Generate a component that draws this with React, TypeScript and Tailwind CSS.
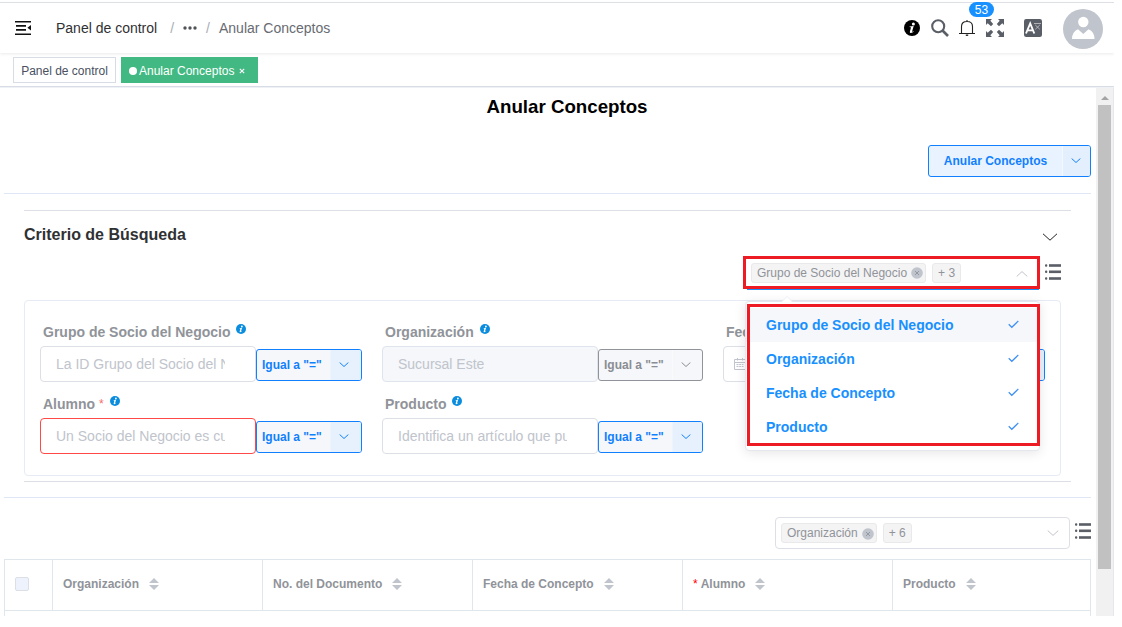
import React from "react";

type Tone = "blue" | "gray";

function InfoIcon({ className }: { className: string }) {
  return (
    <svg viewBox="0 0 16 16" className={className}>
      <circle cx="8" cy="8" r="8" fill="currentColor" />
      <circle cx="9.4" cy="3.9" r="1.5" fill="#fff" />
      <path d="M5.6 6.6 L9.7 6.1 L8.1 11.6 Q8.1 12.1 9.6 10.9 L9.9 11.3 Q8.4 13.2 6.8 13.1 Q5.5 13 5.9 11.5 L7 7.6 Q7 7.1 5.5 7.1 Z" fill="#fff" />
    </svg>
  );
}

function Chevron({ className, up = false }: { className: string; up?: boolean }) {
  return (
    <svg viewBox="0 0 16 8" className={className} fill="none" stroke="currentColor">
      <path d={up ? "M1 7.2 L8 0.8 L15 7.2" : "M1 0.8 L8 7.2 L15 0.8"} vectorEffect="non-scaling-stroke" />
    </svg>
  );
}

function ListIcon() {
  return (
    <svg viewBox="0 0 16 16" className="h-4 w-4 shrink-0" fill="#5a5e66">
      <rect x="0" y="0.2" width="2.3" height="2.6" rx="1" />
      <rect x="0" y="6.5" width="2.3" height="2.6" rx="1" />
      <rect x="0" y="13.2" width="2.3" height="2.6" rx="1" />
      <rect x="4" y="0.2" width="12" height="2.6" />
      <rect x="4" y="6.5" width="12" height="2.6" />
      <rect x="4" y="13.2" width="12" height="2.6" />
    </svg>
  );
}

function Chip({ text, closable = false }: { text: string; closable?: boolean }) {
  return (
    <span className="flex h-5 items-center rounded-[3px] border border-[#e9e9eb] bg-[#f4f4f5] text-xs text-[#909399]">
      <span className={closable ? "pr-[4px] pl-[5px] leading-4" : "px-[5px] leading-4"}>{text}</span>
      {closable && (
        <svg viewBox="0 0 12 12" className="mt-px mr-[2px] h-3 w-3">
          <circle cx="6" cy="6" r="5.8" fill="#c0c4cc" />
          <path d="M4 4 L8 8 M8 4 L4 8" stroke="#909399" strokeWidth="0.9" />
        </svg>
      )}
    </span>
  );
}

function Operator({ tone = "blue", width }: { tone?: Tone; width: string }) {
  const blue = tone === "blue";
  return (
    <div
      className={
        "mt-[3px] flex h-8 shrink-0 overflow-hidden rounded-[3px] border text-xs font-bold " +
        width +
        (blue ? " border-[#1180ff] bg-[#f5f7fa] text-[#1180ff]" : " border-[#909399] bg-[#f5f7fa] text-[#8a8d93]")
      }
    >
      <span className="flex w-[73px] items-center pl-[5px] whitespace-nowrap">Igual a "="</span>
      <span className={"flex grow items-center justify-center border-l pr-[4px] pb-px " + (blue ? "border-[#eef4fd] bg-[#e6f1fd]" : "border-[#fafafa]")}>
        <Chevron className="h-[5px] w-[10px]" />
      </span>
    </div>
  );
}

function Field({
  label,
  placeholder = "",
  required = false,
  disabled = false,
  date = false,
  operatorWidth = "w-[106px]",
}: {
  label: string;
  placeholder?: string;
  required?: boolean;
  disabled?: boolean;
  date?: boolean;
  operatorWidth?: string;
}) {
  const box = required ? "border-[#ff4949] bg-white" : disabled ? "border-[#dfe4ed] bg-[#f5f7fa]" : "border-[#dcdfe6] bg-white";
  return (
    <div className="h-[72px]">
      <div className="flex h-[26px] items-center pl-[3px] text-sm font-bold text-[#909399]">
        <span className="pb-[2px] whitespace-nowrap">{label}</span>
        {required && <span className="pb-[2px] pl-1 text-xs font-normal text-[#f56c6c]">*</span>}
        <InfoIcon className="mb-[9px] ml-[6px] h-[10px] w-[10px] text-[#0a8dde]" />
      </div>
      <div className="flex">
        <div className={"flex h-9 w-[216px] shrink-0 items-center rounded border " + box + (date ? " pl-[10px]" : " pr-[30px] pl-[15px]")}>
          {date && (
            <svg viewBox="0 0 12 12" className="mr-3 h-3 w-3 shrink-0" fill="none" stroke="#c0c4cc">
              <path d="M0.5 1.5 H11.5 V11.5 H0.5 Z M0.5 4.5 H11.5 M3.5 0 V2.5 M8.5 0 V2.5" />
              <path d="M2.5 6.5 H9.5 M2.5 8.5 H9.5" strokeDasharray="2 0.7" />
            </svg>
          )}
          <span className="overflow-hidden text-sm whitespace-nowrap text-[#c0c4cc]">{placeholder}</span>
        </div>
        <Operator tone={disabled ? "gray" : "blue"} width={operatorWidth} />
      </div>
    </div>
  );
}

const options = ["Grupo de Socio del Negocio", "Organización", "Fecha de Concepto", "Producto"];

function CriteriaDropdown() {
  return (
    <div className="absolute top-[45px] left-[2px] z-10 h-[150px] w-[295px] rounded border border-[#e4e7ed] bg-white shadow-[0_2px_12px_rgba(0,0,0,0.1)]">
      <svg viewBox="0 0 12 7" className="absolute -top-[6px] left-[35px] h-[7px] w-3">
        <path d="M0 6.5 L6 0.5 L12 6.5 V7 H0 Z" fill="#fff" />
        <path d="M0 6.5 L6 0.5 L12 6.5" fill="none" stroke="#ebeef5" />
      </svg>
      <ul className="pt-[6px]">
        {options.map((option, i) => (
          <li
            key={option}
            className={"flex h-[34px] items-center justify-between pr-5 pl-5 text-sm font-bold text-[#1890ff] " + (i === 0 ? "bg-[#f5f7fa]" : "")}
          >
            {option}
            <svg viewBox="0 0 11 9" className="mb-px h-[9px] w-[11px]" fill="none" stroke="#3d8ff5" strokeWidth="1.2">
              <path d="M0.7 4.3 L3.8 7.3 L10.3 1" />
            </svg>
          </li>
        ))}
      </ul>
      <div className="absolute top-[2px] left-px h-[142px] w-[293px] border-[3px] border-[#ed1c24]" />
    </div>
  );
}

function Navbar() {
  return (
    <header className="relative z-10 flex h-[51px] shrink-0 items-center border-t border-[#dcdfe3] bg-white pr-[11px] shadow-[0_1px_3px_rgba(0,21,41,0.09)]">
      <svg viewBox="0 0 16 14" className="mr-[25px] mb-px ml-[15px] h-[14px] w-4" fill="#111">
        <path d="M0 0 H16 V1.6 H0 Z M1 4 H11 V5.8 H1 Z M1 8 H11 V9.8 H1 Z M0 12.4 H16 V14 H0 Z M16 4 V9.6 L12.4 6.8 Z" />
      </svg>
      <nav className="flex items-center text-sm">
        <span className="text-[#303133]">Panel de control</span>
        <span className="ml-[13px] text-[#a9adb6]">/</span>
        <svg viewBox="0 0 14 4" className="ml-[9px] h-1 w-[14px]" fill="#505358">
          <circle cx="2" cy="2" r="1.7" />
          <circle cx="7" cy="2" r="1.7" />
          <circle cx="12" cy="2" r="1.7" />
        </svg>
        <span className="mx-[9px] text-[#a9adb6]">/</span>
        <span className="text-[#686b71]">Anular Conceptos</span>
      </nav>
      <div className="ml-auto flex items-center text-[#5a5e66]">
        <InfoIcon className="h-4 w-4 text-black" />
        <svg viewBox="0 0 18 18" className="ml-[11px] h-[18px] w-[18px]" fill="none" stroke="currentColor">
          <circle cx="7.2" cy="7.2" r="6" strokeWidth="2.1" />
          <path d="M11.5 11.5 L17 17" strokeWidth="2.6" />
        </svg>
        <div className="relative ml-[10px]">
          <svg viewBox="0 0 16 18" className="h-[18px] w-4" fill="none" stroke="#222" strokeWidth="1.1">
            <path d="M0 14.5 H16 M2.5 14.5 V7.5 Q2.5 2.5 8 2.5 Q13.5 2.5 13.5 7.5 V14.5 M8 1 V2.5" />
            <path d="M6.8 16.2 H9.2" strokeWidth="1.4" />
          </svg>
          <span className="absolute -top-[17px] left-[10px] flex h-[15px] w-[25px] items-center justify-center rounded-full bg-[#1890ff] text-xs text-white">53</span>
        </div>
        <svg viewBox="0 0 18 18" className="ml-[11px] h-[18px] w-[18px]">
          <g fill="currentColor">
            <path d="M0 0 H6 L4.3 1.7 L7.2 5 L5 7.2 L1.7 4.3 L0 6 Z" />
            <path d="M18 0 V6 L16.3 4.3 L13 7.2 L10.8 5 L13.7 1.7 L12 0 Z" />
            <path d="M0 18 V12 L1.7 13.7 L5 10.8 L7.2 13 L4.3 16.3 L6 18 Z" />
            <path d="M18 18 H12 L13.7 16.3 L10.8 13 L13 10.8 L16.3 13.7 L18 12 Z" />
          </g>
        </svg>
        <svg viewBox="0 0 18 18" className="ml-5 h-[18px] w-[18px]">
          <rect width="18" height="18" rx="2.2" fill="currentColor" />
          <path d="M2 14.5 L6.2 4.5 L10.3 14.5 M3.7 11.4 H8.7" fill="none" stroke="#fff" strokeWidth="1.9" />
          <path d="M10 4.5 H17 M11.3 6 L15.8 10.3 M15.8 6 L11.3 10.3" fill="none" stroke="#c5c7ca" strokeWidth="0.8" />
        </svg>
        <svg viewBox="0 0 40 40" className="mt-px ml-[21px] h-10 w-10">
          <circle cx="20" cy="20" r="20" fill="#c0c4cc" />
          <circle cx="20.3" cy="13" r="5.2" fill="#fff" />
          <path d="M9 30 Q9 22.8 15 20.2 L20.3 25 L25.5 20.2 Q31.5 22.8 31.5 30 Z" fill="#fff" />
        </svg>
      </div>
    </header>
  );
}

const columns = [
  { label: "Organización", width: "w-[210px]" },
  { label: "No. del Documento", width: "w-[210px]" },
  { label: "Fecha de Concepto", width: "w-[210px]" },
  { label: "Alumno", width: "w-[210px]", required: true },
  { label: "Producto", width: "w-[197px]" },
];

export default function App() {
  return (
    <div className="h-[627px] w-[1122px] overflow-hidden bg-white pt-[2px] font-['Liberation_Sans',Arial,sans-serif]">
      <div className="flex h-[614px] w-[1114px] flex-col overflow-hidden">
        <Navbar />
        <div className="flex h-[34px] shrink-0 items-start gap-[5px] border-b border-[#d8dce5] bg-white pt-[4px] pl-[13px] text-xs">
          <span className="flex h-[26px] w-[103px] items-center justify-center border border-[#d8dce5] pt-px whitespace-nowrap text-[#495060]">Panel de control</span>
          <span className="flex h-[26px] w-[137px] items-center bg-[#42b983] pt-px pl-2 whitespace-nowrap text-white">
            <span className="mr-[2px] h-2 w-2 rounded-full bg-white" />
            Anular Conceptos
            <svg viewBox="0 0 6 6" className="ml-[5px] h-[6px] w-[6px]" stroke="#fff" strokeWidth="1.1">
              <path d="M0.8 0.8 L5.2 5.2 M5.2 0.8 L0.8 5.2" />
            </svg>
          </span>
        </div>

        <div className="flex min-h-0 grow border-t border-[#eef1f6]">
          <main className="w-[1096px] overflow-hidden pl-1">
            <h1 className="flex h-[38px] items-center justify-center pt-px pl-[34px] text-[18.72px] font-bold text-black">Anular Conceptos</h1>

            <div className="mr-[5px] flex h-[68px] justify-end border-b border-[#dfe6f5] pt-[19px]">
              <button className="flex h-8 w-[163px] overflow-hidden rounded-[3px] border border-[#1180ff] bg-[#e9f3ff] text-xs font-bold text-[#1180ff]">
                <span className="flex h-full w-[133px] items-center justify-center">Anular Conceptos</span>
                <span className="flex h-full grow items-center justify-center border-l border-[#f3f8ff] bg-[#e4effd] pr-px pb-px">
                  <Chevron className="h-[5px] w-[10px]" />
                </span>
              </button>
            </div>

            <section className="mt-4 mr-[25px] ml-5 h-[272px] border-y border-[#dcdfe6]">
              <div className="flex h-[45px] items-center justify-between pt-[3px] pr-[13px]">
                <h2 className="text-base font-bold text-[#303133]">Criterio de Búsqueda</h2>
                <Chevron className="mt-[3px] h-2 w-4 text-[#222]" />
              </div>

              <div className="mr-[10px] flex h-[44px] items-start justify-end gap-[5px]">
                <div className="relative h-[34px] w-[297px]">
                  <div className="flex h-[33px] items-center gap-[6px] border-[3px] border-[#ed1c24] pr-[9px] pl-[5px]">
                    <Chip text="Grupo de Socio del Negocio" closable />
                    <Chip text="+ 3" />
                    <Chevron up className="mt-[3px] ml-auto h-[6px] w-3 text-[#c0c4cc]" />
                  </div>
                  <div className="mr-px ml-1 h-px bg-[#1890ff]" />
                  <CriteriaDropdown />
                </div>
                <div className="pt-2">
                  <ListIcon />
                </div>
              </div>

              <div className="mr-[10px] grid h-[176px] grid-cols-[342px_341px_322px] content-start rounded border border-[#e6ebf5] pt-[19px] pl-[15px]">
                <Field label="Grupo de Socio del Negocio" placeholder="La ID Grupo del Socio del Negocio" />
                <Field label="Organización" placeholder="Sucursal Este" disabled operatorWidth="w-[105px]" />
                <Field label="Fecha de Concepto" date />
                <Field label="Alumno" placeholder="Un Socio del Negocio es cualquiera" required />
                <Field label="Producto" placeholder="Identifica un artículo que puede" operatorWidth="w-[105px]" />
              </div>
            </section>

            <div className="mt-[15px] mr-[5px] border-t border-[#dfe6f5] pt-[19px]">
              <div className="flex h-[42px] items-start justify-end gap-[5px]">
                <div className="flex h-8 w-[295px] items-center gap-[6px] rounded border border-[#dcdfe6] pr-[10px] pl-[5px]">
                  <Chip text="Organización" closable />
                  <Chip text="+ 6" />
                  <Chevron className="ml-auto h-[6px] w-3 text-[#c0c4cc]" />
                </div>
                <div className="pt-[6px]">
                  <ListIcon />
                </div>
              </div>

              <div className="h-[80px] border-t border-l border-r border-[#dfe6ec]">
                <div className="flex h-[51px] items-center border-b border-[#dfe6ec] text-xs font-bold text-[#909399]">
                  <div className="flex h-full w-[48px] shrink-0 items-center border-r border-[#dfe6ec] pb-[2px] pl-[10px]">
                    <span className="h-[14px] w-[14px] rounded-[2px] border border-[#dcdfe6] bg-[#edf2fc]" />
                  </div>
                  {columns.map((column, i) => (
                    <div
                      key={column.label}
                      className={"flex h-full shrink-0 items-center border-[#dfe6ec] pb-[2px] pl-[10px] " + column.width + (i < 4 ? " border-r" : "")}
                    >
                      {column.required && <span className="mr-[3px] font-normal text-[#ff0000]">*</span>}
                      {column.label}
                      <svg viewBox="0 0 10 12" className="ml-[10px] h-3 w-[10px]" fill="#c0c4cc">
                        <path d="M5 0 L10 5 H0 Z M0 7 H10 L5 12 Z" />
                      </svg>
                    </div>
                  ))}
                </div>
              </div>
            </div>
          </main>

          <aside className="flex w-[17px] flex-col items-center bg-[#f1f1f1]">
            <div className="flex h-[17px] shrink-0 items-center pt-[2px]">
              <svg viewBox="0 0 8 4" className="h-1 w-2" fill="#a3a3a3">
                <path d="M4 0 L8 4 H0 Z" />
              </svg>
            </div>
            <div className="h-[464px] w-[13px] bg-[#c1c1c1]" />
          </aside>
          <div className="w-px bg-[#e4e7f0]" />
        </div>
      </div>
    </div>
  );
}
